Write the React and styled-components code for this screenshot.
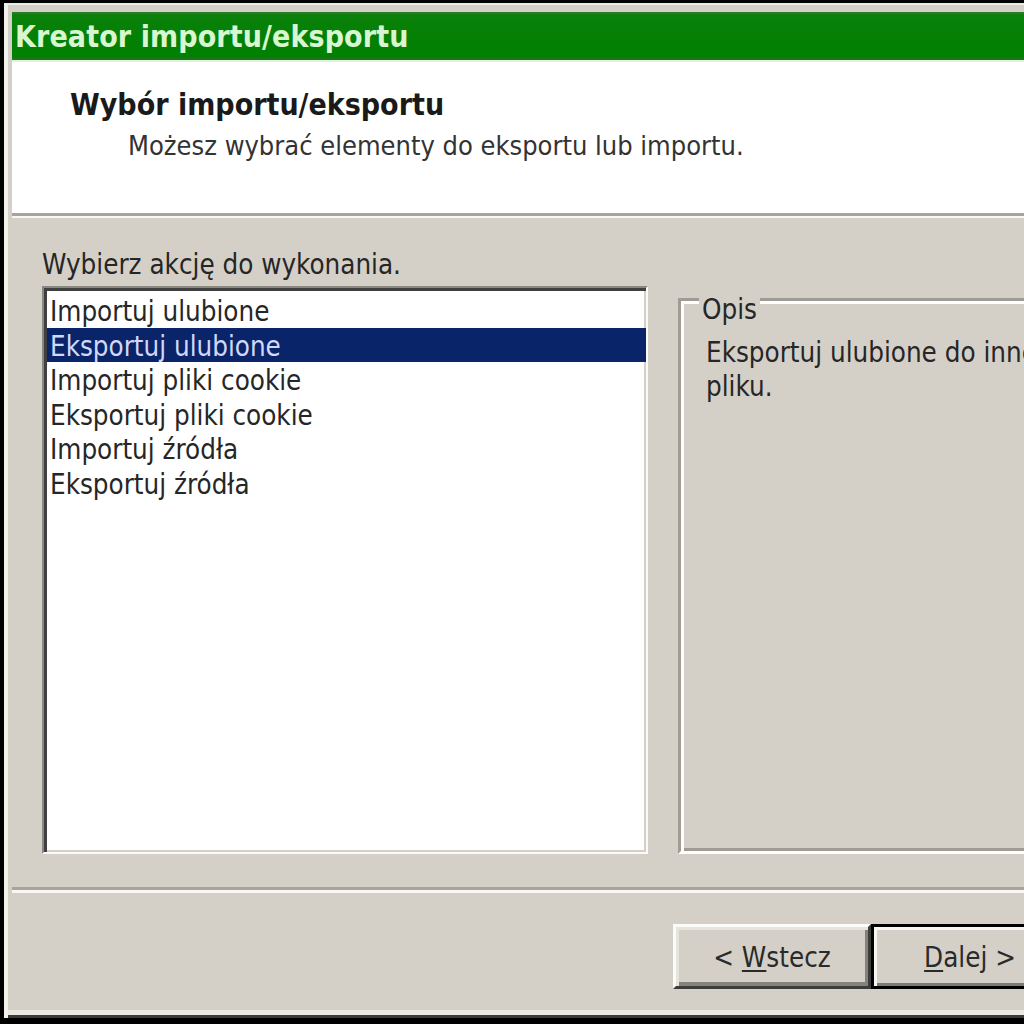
import React from "react";
import styled, { createGlobalStyle } from "styled-components";

const Global = createGlobalStyle`
  html, body {
    margin: 0;
    padding: 0;
    background: #000;
    overflow: hidden;
  }
  body {
    font-family: "DejaVu Sans Condensed", "Liberation Sans", sans-serif;
  }
`;

const FONT = `"DejaVu Sans Condensed", "Liberation Sans", sans-serif`;

const Screen = styled.div`
  width: 1024px;
  height: 1024px;
  box-sizing: border-box;
  padding: 3px 0 0 4px;
  background: #000;
  overflow: hidden;
`;

const Window = styled.div`
  width: 1300px;
  height: 1015px;
  box-sizing: border-box;
  background: #d4d0c8;
  border-top: 2px solid #ecebe6;
  border-left: 4px solid #f2f1ec;
  padding: 7px 0 0 4px;
  display: flex;
  flex-direction: column;
  box-shadow: inset 0 -3px 0 #3a3a3a, inset 0 -8px 0 #e9e8e2;
  font-family: ${FONT};
`;

const TitleBar = styled.div`
  height: 48px;
  display: flex;
  align-items: center;
  padding-left: 3px;
  background: linear-gradient(
    to bottom,
    #2f7f2f 0px,
    #0a800a 3px,
    #008000 44px,
    #2b6e2b 48px
  );
  border-bottom: 2px solid #dff3da;
  color: #d8f7d0;
  font-weight: bold;
  font-size: 30px;
  letter-spacing: 0.1px;
  white-space: nowrap;
`;

const Header = styled.div`
  height: 151px;
  box-sizing: border-box;
  background: #fff;
  padding: 26px 0 0 58px;
`;

const HeaderTitle = styled.div`
  font-weight: bold;
  font-size: 30px;
  line-height: 34px;
  color: #1a1a1a;
`;

const HeaderSub = styled.div`
  margin: 7px 0 0 58px;
  font-size: 27px;
  line-height: 34px;
  color: #333;
`;

const Rule = styled.div`
  height: 0;
  border-top: 3px solid ${(p) => p.$dark || "#a8a49c"};
  border-bottom: ${(p) => p.$light || 2}px solid #f8f7f3;
`;

const Body = styled.div`
  display: grid;
  grid-template-columns: 606px 560px;
  grid-template-rows: 34px 568px;
  column-gap: 30px;
  row-gap: 5px;
  padding: 29px 0 33px 30px;
`;

const Label = styled.div`
  grid-column: 1;
  grid-row: 1;
  font-size: 27.5px;
  line-height: 34px;
  color: #262626;
  white-space: nowrap;
`;

const ListBox = styled.ul`
  grid-column: 1;
  grid-row: 2;
  margin: 0;
  list-style: none;
  box-sizing: border-box;
  padding: 5px 0 0 3px;
  background: #fff;
  border: 2px solid;
  border-color: #8a8680 #fafaf8 #fafaf8 #8a8680;
  box-shadow: inset 3px 3px 0 #404040, inset -2px -2px 0 #d4d0c8;
`;

const Item = styled.li`
  height: 34.5px;
  line-height: 36px;
  padding-left: 3px;
  font-size: 27.5px;
  white-space: nowrap;
  background: ${(p) => (p.$selected ? "#0a246a" : "transparent")};
  color: ${(p) => (p.$selected ? "#d2d8fa" : "#262626")};
`;

const GroupBox = styled.div`
  grid-column: 2;
  grid-row: 2;
  margin-top: 12px;
  position: relative;
  box-sizing: border-box;
  border: 3px solid;
  border-color: #a09c94 #fff #fff #a09c94;
  box-shadow: inset 3px 3px 0 #fff, inset -3px -3px 0 #a09c94;
  padding: 34px 0 0 25px;
`;

const Legend = styled.span`
  position: absolute;
  top: -9px;
  left: 18px;
  padding: 0 3px;
  background: #d4d0c8;
  font-size: 27.5px;
  line-height: 34px;
  color: #262626;
`;

const Description = styled.p`
  margin: 0;
  font-size: 27.5px;
  line-height: 34px;
  color: #262626;
  white-space: nowrap;
`;

const Footer = styled.div`
  display: flex;
  padding: 31px 0 0 661px;
`;

const Button = styled.button`
  width: 198px;
  height: 65px;
  box-sizing: border-box;
  font-family: ${FONT};
  font-size: 27.5px;
  color: #2a2a2a;
  background: #d4d0c8;
  padding: 0;
  display: flex;
  align-items: center;
  justify-content: center;
  border: 3px solid;
  border-color: ${(p) =>
    p.$default ? "#000" : "#fbfbf8 #3c3c3c #3c3c3c #fbfbf8"};
  box-shadow: ${(p) =>
    p.$default
      ? "inset 3px 3px 0 #f6f5f1, inset -3px -3px 0 #7e7b75"
      : "inset 3px 3px 0 #e6e4de, inset -3px -4px 0 #858279"};
`;

const Mnemonic = styled.span`
  text-decoration: underline;
  text-underline-offset: 3px;
`;

const items = [
  "Importuj ulubione",
  "Eksportuj ulubione",
  "Importuj pliki cookie",
  "Eksportuj pliki cookie",
  "Importuj źródła",
  "Eksportuj źródła",
];

export default function App() {
  return (
    <>
      <Global />
      <Screen>
        <Window>
          <TitleBar>Kreator importu/eksportu</TitleBar>
          <Header>
            <HeaderTitle>Wybór importu/eksportu</HeaderTitle>
            <HeaderSub>Możesz wybrać elementy do eksportu lub importu.</HeaderSub>
          </Header>
          <Rule />
          <Body>
            <Label>Wybierz akcję do wykonania.</Label>
            <ListBox>
              {items.map((t, i) => (
                <Item key={t} $selected={i === 1}>
                  {t}
                </Item>
              ))}
            </ListBox>
            <GroupBox>
              <Legend>Opis</Legend>
              <Description>
                Eksportuj ulubione do innego programu lub
                <br />
                pliku.
              </Description>
            </GroupBox>
          </Body>
          <Rule $dark="#a9a49b" $light={3} />
          <Footer>
            <Button>
              &lt;&nbsp;<Mnemonic>W</Mnemonic>stecz
            </Button>
            <Button $default>
              <Mnemonic>D</Mnemonic>alej&nbsp;&gt;
            </Button>
          </Footer>
        </Window>
      </Screen>
    </>
  );
}
